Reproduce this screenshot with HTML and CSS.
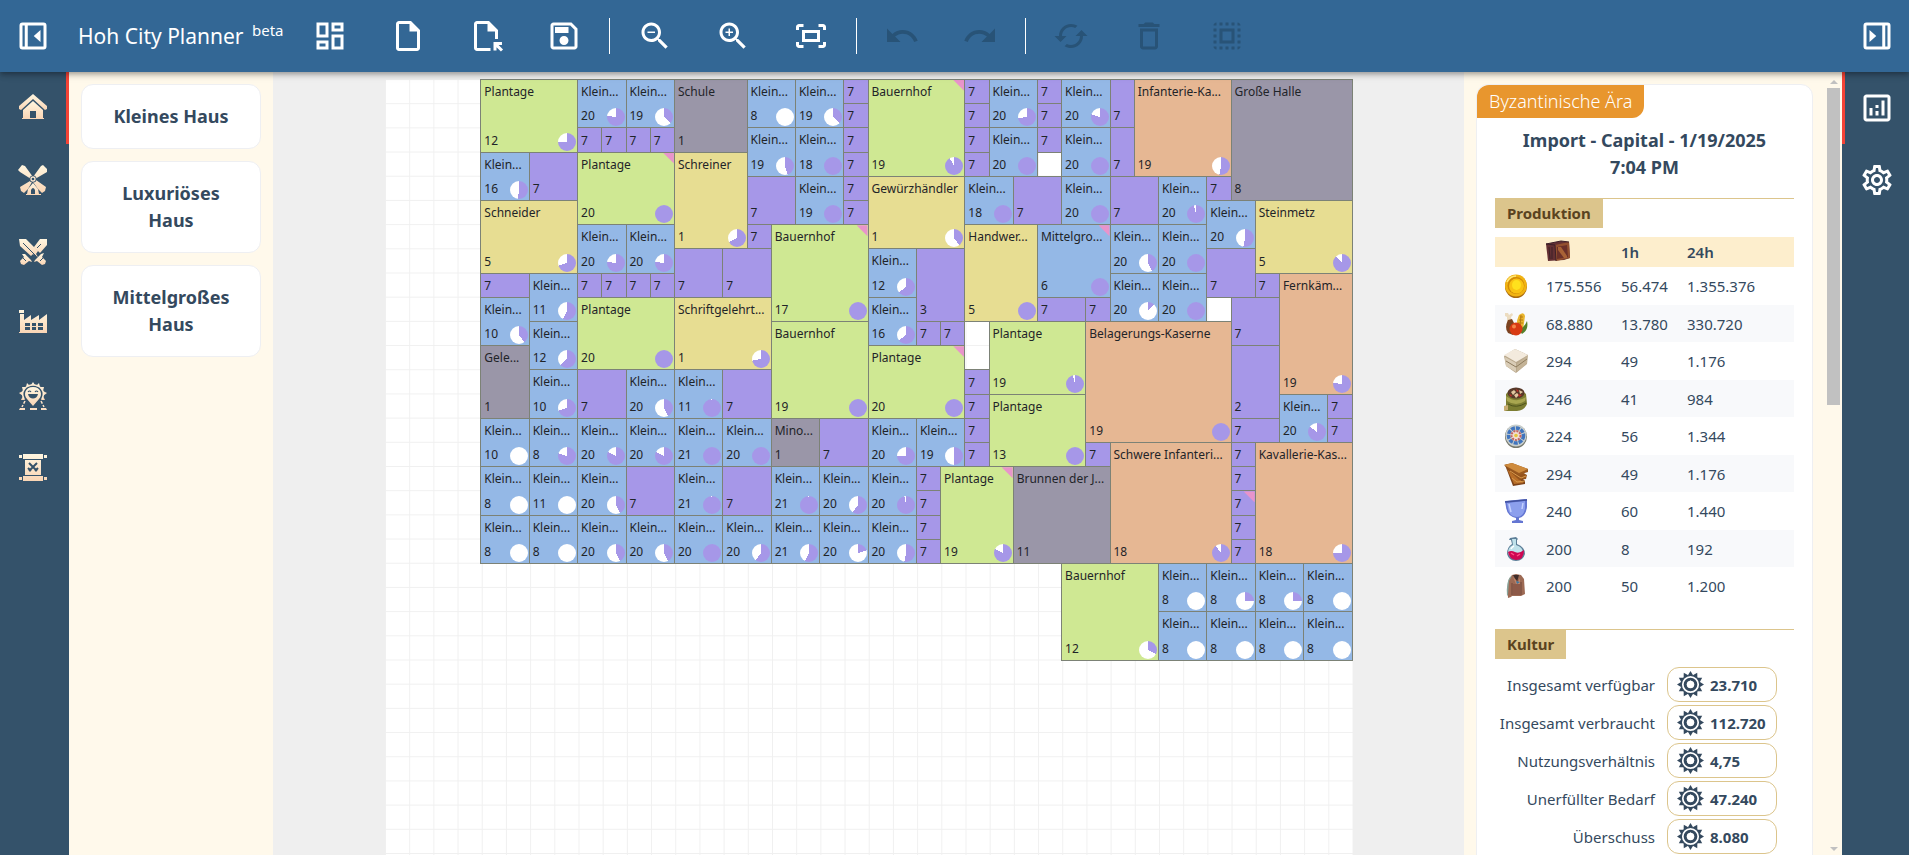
FILE: index.html
```html
<!DOCTYPE html>
<html lang="de">
<head>
<meta charset="utf-8">
<meta name="viewport" content="width=device-width, initial-scale=1">
<title>Hoh City Planner</title>
<link rel="stylesheet" href="styles.css">
</head>
<body>
<header class="topbar">
  <button class="tool tool-edge" type="button" aria-label="Menü"><svg viewBox="0 0 24 24"><path fill-rule="evenodd" d="M5 3h14a2 2 0 0 1 2 2v14a2 2 0 0 1-2 2H5a2 2 0 0 1-2-2V5a2 2 0 0 1 2-2zM5 5v14h1.500V5zM8.500 5v14H19V5zM17 8v8l-4.500-4z"/></svg></button>
  <h1 class="brand">Hoh City Planner <sup>beta</sup></h1>
  <div class="tools">
    <div class="tool-group">
      <button class="tool" type="button" aria-label="Dashboard"><svg viewBox="0 0 24 24"><path d="M19 5v2h-4V5h4M9 5v6H5V5h4m10 8v6h-4v-6h4M9 17v2H5v-2h4M21 3h-8v6h8V3zM11 3H3v10h8V3zm10 8h-8v10h8V11zm-10 4H3v6h8v-6z"/></svg></button>
      <button class="tool" type="button" aria-label="Neu"><svg viewBox="0 0 24 24"><path d="M14 2H6c-1.100 0-1.990.9-1.990 2L4 20c0 1.100.89 2 1.990 2H18c1.100 0 2-.9 2-2V8l-6-6zM6 20V4h7v5h5v11H6z"/></svg></button>
      <button class="tool" type="button" aria-label="Öffnen"><svg viewBox="0 0 24 24"><path d="M15 22H6c-1.100 0-2-.9-2-2V4c0-1.100.9-2 2-2h8l6 6v6h-2V9h-5V4H6v16h9v2zm4-.34v-2.240l2.950 2.950 1.410-1.410L20.410 18h2.240v-2H17v5.660h2z"/></svg></button>
      <button class="tool" type="button" aria-label="Speichern"><svg viewBox="0 0 24 24"><path d="M17 3H5c-1.110 0-2 .9-2 2v14c0 1.100.89 2 2 2h14c1.100 0 2-.9 2-2V7l-4-4zm2 16H5V5h11.170L19 7.830V19zm-7-7c-1.660 0-3 1.340-3 3s1.340 3 3 3 3-1.340 3-3-1.340-3-3-3zM6 6h9v4H6z"/></svg></button>
    </div>
    <span class="divider"></span>
    <div class="tool-group">
      <button class="tool" type="button" aria-label="Verkleinern"><svg viewBox="0 0 24 24"><path d="M15.500 14h-.79l-.28-.27C15.410 12.590 16 11.110 16 9.500 16 5.910 13.090 3 9.500 3S3 5.910 3 9.500 5.910 16 9.500 16c1.610 0 3.090-.59 4.230-1.570l.27.28v.79l5 4.990L20.490 19l-4.990-5zm-6 0C7.010 14 5 11.990 5 9.500S7.010 5 9.500 5 14 7.010 14 9.500 11.990 14 9.500 14zM7 9h5v1H7z"/></svg></button>
      <button class="tool" type="button" aria-label="Vergrößern"><svg viewBox="0 0 24 24"><path d="M15.500 14h-.79l-.28-.27C15.410 12.590 16 11.110 16 9.500 16 5.910 13.090 3 9.500 3S3 5.910 3 9.500 5.910 16 9.500 16c1.610 0 3.090-.59 4.230-1.570l.27.28v.79l5 4.990L20.490 19l-4.990-5zm-6 0C7.010 14 5 11.990 5 9.500S7.010 5 9.500 5 14 7.010 14 9.500 11.990 14 9.500 14zM12 10h-2v2H9v-2H7V9h2V7h1v2h2v1z"/></svg></button>
      <button class="tool" type="button" aria-label="Einpassen"><svg viewBox="0 0 24 24"><path d="M17 4h3c1.100 0 2 .9 2 2v2h-2V6h-3V4zM4 8V6h3V4H4c-1.100 0-2 .9-2 2v2h2zm16 8v2h-3v2h3c1.100 0 2-.9 2-2v-2h-2zM7 18H4v-2H2v2c0 1.100.9 2 2 2h3v-2zM16 10v4H8v-4h8m2-2H6v8h12V8z"/></svg></button>
    </div>
    <span class="divider"></span>
    <div class="tool-group">
      <button class="tool" type="button" aria-label="Rückgängig" disabled><svg viewBox="0 0 24 24"><path d="M12.500 8c-2.650 0-5.050.99-6.900 2.600L2 7v9h9l-3.620-3.620c1.390-1.160 3.160-1.880 5.120-1.880 3.540 0 6.550 2.310 7.600 5.500l2.370-.78C21.080 11.030 17.150 8 12.500 8z"/></svg></button>
      <button class="tool" type="button" aria-label="Wiederholen" disabled><svg viewBox="0 0 24 24"><path d="M18.400 10.600C16.550 8.990 14.150 8 11.500 8c-4.650 0-8.580 3.030-9.960 7.220L3.900 16c1.050-3.190 4.050-5.500 7.600-5.500 1.950 0 3.730.72 5.120 1.880L13 16h9V7l-3.600 3.600z"/></svg></button>
    </div>
    <span class="divider"></span>
    <div class="tool-group">
      <button class="tool" type="button" aria-label="Drehen" disabled><svg viewBox="0 0 24 24"><path d="M19 8l-4 4h3c0 3.310-2.690 6-6 6-1.010 0-1.970-.25-2.800-.7l-1.460 1.460C8.970 19.540 10.430 20 12 20c4.420 0 8-3.580 8-8h3l-4-4zM6 12c0-3.310 2.690-6 6-6 1.010 0 1.970.25 2.800.7l1.460-1.460C15.030 4.460 13.570 4 12 4c-4.420 0-8 3.580-8 8H1l4 4 4-4H6z"/></svg></button>
      <button class="tool" type="button" aria-label="Löschen" disabled><svg viewBox="0 0 24 24"><path d="M16 9v10H8V9h8m-1.500-6h-5l-1 1H5v2h14V4h-3.500l-1-1zM18 7H6v12c0 1.100.9 2 2 2h8c1.100 0 2-.9 2-2V7z"/></svg></button>
      <button class="tool" type="button" aria-label="Auswählen" disabled><svg viewBox="0 0 24 24"><path d="M3 5h2V3c-1.100 0-2 .9-2 2zm0 8h2v-2H3v2zm4 8h2v-2H7v2zM3 9h2V7H3v2zm10-6h-2v2h2V3zm6 0v2h2c0-1.100-.9-2-2-2zM5 21v-2H3c0 1.100.9 2 2 2zm-2-4h2v-2H3v2zM9 3H7v2h2V3zm2 18h2v-2h-2v2zm8-8h2v-2h-2v2zm0 8c1.100 0 2-.9 2-2h-2v2zm0-12h2V7h-2v2zm0 8h2v-2h-2v2zm-4 4h2v-2h-2v2zm0-16h2V3h-2v2zM7 17h10V7H7v10zm2-8h6v6H9V9z"/></svg></button>
    </div>
  </div>
  <button class="tool tool-edge" type="button" aria-label="Seitenleiste"><svg viewBox="0 0 24 24"><path fill-rule="evenodd" d="M5 3h14a2 2 0 0 1 2 2v14a2 2 0 0 1-2 2H5a2 2 0 0 1-2-2V5a2 2 0 0 1 2-2zM17.500 5v14H19V5zM5 5v14h10.500V5zM7 8v8l4.500-4z"/></svg></button>
</header>

<div class="workspace">
  <nav class="rail rail-left">
    <button class="tab active" type="button" aria-label="Häuser"><svg viewBox="0 0 28 28"><g fill="url(#cream)"><path d="M14 0 0 12v3l2 1L14 5l12 11 2-1v-3z"/><path d="M14 7 4 16v8H3v1h22v-1h-1v-8zm-3 10h6v7h-6z" fill-rule="evenodd"/></g></svg></button>
    <button class="tab" type="button" aria-label="Bauernhöfe"><svg viewBox="0 0 28 28"><g fill="url(#cream)"><path d="M-1 4 3-1l3 1 8 11-2 2L1 6zM24-1l4 4v3L16 13l-2-2 8-11zM11 15l2 1-4 7-4 4-3-2-1-4zM17 14l10 7-1 4-3 2-4-4-5-7z"/><path fill-rule="evenodd" d="M14 17l-5 6-1 5H7v1h15v-1h-2l-1-5zm-2 7q2-4 4 0v4h-4z"/></g><circle cx="14" cy="13" r="3.500" fill="#34526a"/><circle cx="14" cy="13" r="2" fill="none" stroke="#fbe6cf" stroke-width="1.300"/></svg></button>
    <button class="tab" type="button" aria-label="Kasernen"><svg viewBox="0 0 28 28"><g fill="url(#cream)"><path d="M0 1h7l12 12-2 3 2 3-5-3-2 2L1 8zM21 1h7v6l-7 8-4-4-2-2z"/><path d="M6 16l6 6 1 2-3-1-5 4-3-1-1-3 4-4-2-3zM22 16l3-1-2 4 4 4-1 3-3 1-5-4-3 1 1-2z"/></g><path d="M4 5l13 13M22 6l-4 4M4 20l3 3M24 20l-3 3" stroke="#34526a" fill="none"/></svg></button>
    <button class="tab" type="button" aria-label="Werkstätten"><svg viewBox="0 0 28 28"><path fill="url(#cream)" fill-rule="evenodd" d="M0 0h5v3H0zM1 4h4v6l7-5v5l8-5v5l8-6v19H0v-1h1zM6 13v3h5v-3zm7 0v3h4v-3zm6 0v3h5v-3zM6 17v3h5v-3zm7 0v3h4v-3zm6 0v3h5v-3z"/></svg></button>
    <button class="tab" type="button" aria-label="Kultur"><svg viewBox="0 0 28 28"><path fill="url(#cream)" d="M14 0l2 3h-4zM8 1l3 3-4 1zM20 1l1 4-4-1zM3 5h4L4 9zM25 5l-1 4-3-4zM0 11l4-2v5zM28 11l-4 3V9zM2 18l2-4 2 4zM26 18h-4l2-4z"/><path fill="none" stroke="#fdebd2" stroke-width="1.500" d="M5 17C1 9 7 3 14 3s13 6 9 14"/><path fill="url(#cream)" fill-rule="evenodd" d="M14 5c-8 0-10 8-6 12l6 7 6-7c4-4 2-12-6-12zm-5 7h10c-1 6-9 6-10 0z"/><path d="M9 10q1.500-2 3 0M16 10q1.500-2 3 0" stroke="#34526a" fill="none" stroke-width="1.200"/><path d="M6 19l-3 6M22 19l3 6" stroke="#fbe2c8" stroke-width="1.500" stroke-dasharray="3 1.500"/><path d="M0 28l1-2h5v2zM11 26h7v2h-7zM22 26h5l1 2h-6z" fill="#fbdfc4"/></svg></button>
    <button class="tab" type="button" aria-label="Schriftrolle"><svg viewBox="0 0 28 28"><g fill="url(#cream)"><path d="M4 0h20v5H4zM0 1h3v3H0zM25 1h3v3h-3zM4 22h20v5H4zM0 23h3v3H0zM25 23h3v3h-3zM6 6h16v15H6z"/></g><path d="M10 9l8 8M18 9l-8 8M9 14l3 3M19 14l-3 3" stroke="#34526a" stroke-width="2"/></svg></button>
  </nav>

  <aside class="palette">
    <button class="palette-card" type="button">Kleines Haus</button>
    <button class="palette-card" type="button">Luxuriöses Haus</button>
    <button class="palette-card" type="button">Mittelgroßes Haus</button>
  </aside>

  <main class="stage"><div class="board" id="board"></div></main>

  <aside class="info">
    <div class="info-body">
      <section class="card">
        <span class="age">Byzantinische Ära</span>
        <h2 class="city-name">Import - Capital - 1/19/2025 <span class="time">7:04 PM</span></h2>
        <div class="section-head"><h3>Produktion</h3></div>
        <table class="production">
          <thead><tr><th class="cell-icon"></th><th><svg class="res" viewBox="0 0 24 24" role="img" aria-label="Lager"><path fill="#643033" d="M0 4 15 1l8 1 1 16-6 2L2 21z"/><path fill="#93502f" d="m9 5 14-3 1 16-14 3z"/><path fill="#6b3029" d="m11 7 10-2 1 12-11 2z"/><path fill="#a86236" d="m12 7 3 0 6 9v2l-3 0-6-8z"/><path stroke="#3d2028" fill="none" d="M9 5 0 4M3 7l1 12M6 7v12M9 5l1 16M0 4l15-3 8 1"/></svg></th><th>1h</th><th>24h</th></tr></thead>
          <tbody>
            <tr><td class="cell-icon"><svg class="res" viewBox="0 0 24 24" role="img" aria-label="Münzen"><ellipse cx="12" cy="12.500" rx="11" ry="11.500" fill="#a8690e"/><ellipse cx="12" cy="11.500" rx="11" ry="11" fill="#f1b312"/><ellipse cx="12" cy="11.500" rx="8.500" ry="8.500" fill="#d08a08"/><ellipse cx="12.500" cy="12" rx="7.500" ry="7.500" fill="#f9c212"/><ellipse cx="12.500" cy="11" rx="4.500" ry="5" fill="#ffe11d"/><path d="M3 8q3-6 9-6" stroke="#ffe777" stroke-width="1.500" fill="none"/></svg></td><td>175.556</td><td>56.474</td><td>1.355.376</td></tr>
            <tr><td class="cell-icon"><svg class="res" viewBox="0 0 24 24" role="img" aria-label="Nahrung"><path d="m1 1 3 0 1 2 3-2 1 2-2 2 1 5-5 1V5L1 4z" fill="#ecdcc0"/><path d="M4 8l4-1 3 6-2 10-5-2q-4-5 0-13z" fill="#7b4321"/><path d="M15 3q5-4 6 1l-2 14-6-2q-1-7 2-13z" fill="#e9b52e"/><path d="M16 5l3 0M15 8h4M14 11h5M17 3l-1 12" stroke="#b77b12" fill="none"/><path d="M23 9q2 9-5 13l-3-4q5-2 8-9z" fill="#55802a"/><circle cx="12" cy="17" r="6.500" fill="#d83a13"/><circle cx="10" cy="14.500" r="2" fill="#f58549"/></svg></td><td>68.880</td><td>13.780</td><td>330.720</td></tr>
            <tr><td class="cell-icon"><svg class="res" viewBox="0 0 24 24" role="img" aria-label="Marmor"><path d="M0 7 11 0l13 6-1 9-11 9-10-7z" fill="#b9a88c"/><path d="M0 6 11 0l13 6-12 7z" fill="#f3eadd"/><path d="m1 8 11 6v9L2 17z" fill="#d9ccb6"/><path d="m13 15 10-8v7l-10 9z" fill="#c4b397"/><path d="m2 12 10 6 11-8" stroke="#8f7d5f" fill="none"/></svg></td><td>294</td><td>49</td><td>1.176</td></tr>
            <tr><td class="cell-icon"><svg class="res" viewBox="0 0 24 24" role="img" aria-label="Gewürze"><path d="M2 7q9-10 20 0l1 10q-3 8-15 7H1l1-6z" fill="#7c7d32"/><path d="M2 9q10 8 20 1l-1 4q-9 6-18 0z" fill="#a9a650"/><path d="M4 17q8 5 18-1" stroke="#4f531d" fill="none"/><ellipse cx="12" cy="6" rx="8.500" ry="5.500" fill="#57392a"/><path d="m7 5 3-2 2 2-3 3zM15 3l4 2-3 2zM10 8l3-2 2 2-3 3z" fill="#e2c6a0"/><path d="m12 2 3 2-2 1zM14 7l4 1-3 2zM5 7l3 1-1 2z" fill="#bd2f28"/><path d="M0 19l4-1v5l-4 1z" fill="#c9ad72"/></svg></td><td>246</td><td>41</td><td>984</td></tr>
            <tr><td class="cell-icon"><svg class="res" viewBox="0 0 24 24" role="img" aria-label="Mosaik"><ellipse cx="12" cy="12.500" rx="11" ry="11.500" fill="#77796d"/><ellipse cx="12" cy="11.500" rx="10.500" ry="11" fill="#c9cfcd"/><circle cx="12" cy="11.500" r="7.500" fill="none" stroke="#4175be" stroke-width="3.500" stroke-dasharray="4 1"/><circle cx="12" cy="11.500" r="4.500" fill="#f0ded4" stroke="#c56563" stroke-width="2" stroke-dasharray="2 1"/><circle cx="12" cy="11.500" r="1.800" fill="#e6c63d"/></svg></td><td>224</td><td>56</td><td>1.344</td></tr>
            <tr><td class="cell-icon"><svg class="res" viewBox="0 0 24 24" role="img" aria-label="Bretter"><path d="M1 3 4 2l17 17v3L9 24z" fill="#7b4218"/><path d="M3 7 20 21l-10 1z" fill="#b86e28"/><path d="M1 4 6 3l17 10-1 4-7 1z" fill="#95541d"/><path d="M0 3 8 1l16 6v3l-9 3z" fill="#9b5a20"/><path d="M0 3 8 1l16 6-9 4z" fill="#ce8b3d"/><path d="m6 9 11 7 5-2M8 16l5 4 8-1" stroke="#d8994b" fill="none"/></svg></td><td>294</td><td>49</td><td>1.176</td></tr>
            <tr><td class="cell-icon"><svg class="res" viewBox="0 0 24 24" role="img" aria-label="Glas"><path d="M1 2 23 0v8q-1 9-8 11v2l4 1v2H8v-2l4-1v-2Q3 17 2 8z" fill="#6476d2"/><path d="M3 4l18-2v8q-2 8-8 8-8-1-9-8z" fill="#8c9fed"/><path d="M5 5l2 8M19 4l-1 6" stroke="#c5d1ff" stroke-width="1.500"/><path d="M1 3l22-2" stroke="#41519e" stroke-width="1.500"/></svg></td><td>240</td><td>60</td><td>1.440</td></tr>
            <tr><td class="cell-icon"><svg class="res" viewBox="0 0 24 24" role="img" aria-label="Elixier"><path d="M6 1l6-1 2 2-1 1v4q8 3 8 10-2 7-9 7t-9-7q0-7 5-10l-1-4H5z" fill="#5d7f98"/><path d="M8 2h4v6q7 2 7 8-1 6-7 6t-8-6q0-6 5-8z" fill="#bfe1ea"/><path d="M4 15q3-2 7 0t9-2q0 10-8 10-7-1-8-8z" fill="#ce0752"/><path d="M7 16l3 2M13 19l3-2" stroke="#ff4d84" stroke-width="1.500"/><path d="M7 12q1-2 3-3" stroke="#fff" fill="none" stroke-width="1.500"/></svg></td><td>200</td><td>8</td><td>192</td></tr>
            <tr><td class="cell-icon"><svg class="res" viewBox="0 0 24 24" role="img" aria-label="Kleidung"><path d="m8 1 4-1 5 1 3 4 1 15-4 2-9 0-1 1-3 1Q3 12 5 5z" fill="#9d6a54"/><path d="m8 2-3 5-1 14-1 1Q2 8 6 3z" fill="#88a49b"/><path d="M9 1h6l-2 7z" fill="#3f2d2b"/><path d="M8 9v12M17 8v13" stroke="#70463a"/><path d="M9 10h7v11H9z" fill="#8d5948"/><path d="m9 3 3 7 4 0V4l-2 4z" fill="#c08468"/><path d="m12 7 4 1-3 2z" fill="#3979a4"/></svg></td><td>200</td><td>50</td><td>1.200</td></tr>
          </tbody>
        </table>
        <div class="section-head"><h3>Kultur</h3></div>
        <dl class="culture">
          <dt>Insgesamt verfügbar</dt><dd><svg class="gear" viewBox="0 0 28 28"><use href="#gear"/></svg>23.710</dd>
          <dt>Insgesamt verbraucht</dt><dd><svg class="gear" viewBox="0 0 28 28"><use href="#gear"/></svg>112.720</dd>
          <dt>Nutzungsverhältnis</dt><dd><svg class="gear" viewBox="0 0 28 28"><use href="#gear"/></svg>4,75</dd>
          <dt>Unerfüllter Bedarf</dt><dd><svg class="gear" viewBox="0 0 28 28"><use href="#gear"/></svg>47.240</dd>
          <dt>Überschuss</dt><dd><svg class="gear" viewBox="0 0 28 28"><use href="#gear"/></svg>8.080</dd>
        </dl>
      </section>
    </div>
    <div class="scrollbar"><span class="arrow arrow-up"></span><span class="track"><span class="thumb"></span></span><span class="arrow arrow-down"></span></div>
  </aside>

  <nav class="rail rail-right">
    <button class="tab active" type="button" aria-label="Statistik"><svg class="glyph" viewBox="0 0 24 24"><path d="M19 3H5c-1.100 0-2 .9-2 2v14c0 1.100.9 2 2 2h14c1.100 0 2-.9 2-2V5c0-1.100-.9-2-2-2zm0 16H5V5h14v14zM7 12h2v5H7zm8-5h2v10h-2zm-4 7h2v3h-2zm0-4h2v2h-2z"/></svg></button>
    <button class="tab" type="button" aria-label="Einstellungen"><svg class="glyph" viewBox="0 0 24 24"><path d="M19.430 12.980c.04-.32.07-.64.07-.98 0-.34-.03-.66-.07-.98l2.110-1.650c.19-.15.24-.42.12-.64l-2-3.460c-.09-.16-.26-.25-.44-.25-.06 0-.12.01-.17.03l-2.490 1c-.52-.4-1.080-.73-1.690-.98l-.38-2.650C14.460 2.180 14.250 2 14 2h-4c-.25 0-.46.18-.49.42l-.38 2.650c-.61.25-1.170.59-1.690.98l-2.490-1c-.06-.02-.12-.03-.18-.03-.17 0-.34.09-.43.25l-2 3.460c-.13.22-.07.49.12.64l2.110 1.650c-.04.32-.07.65-.07.98 0 .33.03.66.07.98l-2.110 1.650c-.19.15-.24.42-.12.64l2 3.460c.09.16.26.25.44.25.06 0 .12-.01.17-.03l2.490-1c.52.4 1.080.73 1.690.98l.38 2.650c.03.24.24.42.49.42h4c.25 0 .46-.18.49-.42l.38-2.650c.61-.25 1.170-.59 1.690-.98l2.490 1c.06.02.12.03.18.03.17 0 .34-.09.43-.25l2-3.460c.12-.22.07-.49-.12-.64l-2.110-1.650zm-1.980-1.710c.04.31.05.52.05.73 0 .21-.02.43-.05.73l-.14 1.130.89.7 1.080.84-.7 1.210-1.270-.51-1.040-.42-.9.68c-.43.32-.84.56-1.250.73l-1.060.43-.16 1.130-.2 1.350h-1.400l-.19-1.350-.16-1.130-1.060-.43c-.43-.18-.83-.41-1.230-.71l-.91-.7-1.060.43-1.270.51-.7-1.210 1.080-.84.89-.7-.14-1.130c-.03-.31-.05-.54-.05-.74s.02-.43.05-.73l.14-1.130-.89-.7-1.080-.84.7-1.210 1.270.51 1.040.42.9-.68c.43-.32.84-.56 1.250-.73l1.060-.43.16-1.130.2-1.350h1.390l.19 1.350.16 1.130 1.060.43c.43.18.83.41 1.230.71l.91.7 1.060-.43 1.270-.51.7 1.210-1.070.85-.89.7.14 1.130zM12 8c-2.210 0-4 1.790-4 4s1.790 4 4 4 4-1.790 4-4-1.790-4-4-4zm0 6c-1.100 0-2-.9-2-2s.9-2 2-2 2 .9 2 2-.9 2-2 2z"/></svg></button>
  </nav>
</div>

<svg class="defs" width="0" height="0" aria-hidden="true">
  <defs>
    <linearGradient id="cream" x1="0" y1="0" x2="0" y2="1"><stop offset="0" stop-color="#fff6e0"/><stop offset="1" stop-color="#f9d5b5"/></linearGradient>
    <g id="gear" fill="#34495e">
      <g id="teeth"><path d="M14 0l3 5h-6z"/><path d="M14 28l3-5h-6z"/><path d="M0 14l5-3v6z"/><path d="M28 14l-5-3v6z"/></g>
      <use href="#teeth" transform="rotate(30 14 14)"/><use href="#teeth" transform="rotate(60 14 14)"/>
      <circle cx="14" cy="14" r="9.500" fill="#fff" stroke="#34495e" stroke-width="1.200"/>
      <circle cx="14" cy="14" r="5.500" fill="#fff" stroke="#34495e" stroke-width="3.200"/>
      <path d="M14 9.500 9.800 14H12v3h4v-3h2.200z" fill="#fff"/>
    </g>
  </defs>
</svg>
<script src="map.js"></script>
</body>
</html>
```
FILE: styles.css
```css
* { box-sizing: border-box; }
body {
  margin: 0;
  height: 100vh;
  display: flex;
  flex-direction: column;
  overflow: hidden;
  font-family: "Noto Sans", "Open Sans", sans-serif;
  font-size: 15px;
  color: #34495e;
  background: #efefef;
}
button { font: inherit; color: inherit; border: 0; background: none; padding: 0; cursor: pointer; }
h1, h2, h3, dl, dd { margin: 0; }
.defs { display: block; flex: none; }

.topbar {
  position: relative;
  z-index: 2;
  flex: none;
  height: 72px;
  display: flex;
  align-items: center;
  background: #336795;
  color: #fff;
  box-shadow: 0 2px 4px -1px rgba(0,0,0,.2), 0 4px 5px rgba(0,0,0,.14), 0 1px 10px rgba(0,0,0,.12);
}
.brand { width: 222px; margin-left: 12px; font-size: 21px; font-weight: 400; line-height: 30px; white-space: nowrap; }
.brand sup { margin-left: 3px; font-size: 15px; line-height: 0; }
.tools { flex: 1; display: flex; align-items: center; gap: 15px; }
.tool-group { display: flex; gap: 18px; }
.tool { width: 60px; height: 60px; display: grid; place-items: center; flex: none; }
.tool-edge { width: 64px; }
.tool-edge:first-child { width: 66px; }
.tool svg { width: 36px; height: 36px; fill: #fff; }
.tool:disabled svg { fill: #285377; }
.divider { width: 1px; height: 36px; background: #fff; }

.workspace { flex: 1; min-height: 0; display: flex; }
.rail { flex: none; background: #34526a; }
.rail-left { width: 69px; }
.rail-right { width: 67px; }
.tab { width: 100%; height: 72px; display: grid; place-items: center; border: 0 solid transparent; }
.rail-left .tab { border-right-width: 3px; }
.rail-right .tab { border-left-width: 3px; }
.rail .tab.active { border-color: #f44336; }
.tab svg { width: 28px; height: 28px; overflow: visible; }
.tab svg.glyph { width: 36px; height: 36px; fill: #fff; }

.palette { flex: none; width: 204px; padding: 12px; display: flex; flex-direction: column; gap: 12px; background: #fff9eb; }
.palette-card {
  padding: 18px;
  border: 1px solid #eeeff2;
  border-radius: 12px;
  background: #fff;
  font-size: 18px;
  font-weight: 700;
  line-height: 27px;
}

.stage { flex: 1; min-width: 0; overflow: hidden; padding-top: 7px; background: #efefef; }
.board {
  width: 100%;
  max-width: 968px;
  margin: 0 auto;
  aspect-ratio: 1;
  display: grid;
  grid-template: repeat(40, minmax(0, 1fr)) / repeat(40, minmax(0, 1fr));
  background-color: #fff;
  background-image: linear-gradient(#f0f0f0 1px, transparent 1px), linear-gradient(90deg, #f0f0f0 1px, transparent 1px);
  background-size: 2.5% 2.5%;
}
.tile {
  position: relative;
  overflow: hidden;
  margin: 0 0 -1px -1px;
  padding: 0 1px 0 3px;
  border: 1px solid #7c8276;
  display: flex;
  flex-direction: column;
  justify-content: space-between;
  font-size: 12px;
  line-height: 23px;
  color: #1f2428;
  white-space: nowrap;
}
.level { margin-top: auto; }
.home { background: #94b8e6; }
.culture-site { background: #a697e8; }
.farm { background: #cfe893; }
.workshop { background: #e7dd92; }
.barracks { background: #e6b793; }
.special { background: #9a96a8; }
.pie { position: absolute; right: 1px; bottom: 1px; width: 18px; height: 18px; border-radius: 50%; }
.flag { position: absolute; top: 0; right: 0; width: 11px; height: 11px; background: #e894cb; clip-path: polygon(0 0, 100% 0, 100% 100%); }

.info { flex: none; width: 378px; display: flex; background: #fff9eb; }
.info-body { flex: 1; padding: 12px 14px 0 12px; overflow: hidden; }
.card { border: 1px solid #eeeff2; border-radius: 12px; padding: 0 18px 24px; background: #fff; }
.age {
  display: inline-block;
  margin-left: -18px;
  padding: 0 12px;
  border-radius: 12px 0 12px 0;
  background: #e8962e;
  color: #fff;
  font-size: 18px;
  font-weight: 300;
  line-height: 33px;
}
.city-name { margin: 9px 0 17px; text-align: center; font-size: 18px; font-weight: 700; line-height: 27px; }
.time { display: block; }
.section-head { border-top: 1px solid #dcc58c; }
.section-head h3 { display: inline-block; padding: 0 12px; background: #dcc58c; color: #5a4320; font-size: 15px; font-weight: 700; line-height: 29px; }
.production { width: 100%; margin: 9px 0 24px; border-collapse: collapse; table-layout: fixed; }
.production th, .production td { padding: 0; text-align: left; }
.production th { height: 30px; background: #fdeecd; font-weight: 600; }
.production th:nth-child(1) { width: 51px; }
.production th:nth-child(2) { width: 75px; }
.production th:nth-child(3) { width: 66px; }
.production td { height: 38px; }
.production tr:nth-child(even) td { height: 37px; background: #f8f9fb; }
.production .cell-icon { padding-left: 9px; }
.res { display: block; width: 24px; height: 24px; }
.culture { display: grid; grid-template-columns: 160px 110px; gap: 3px 12px; margin-top: 8px; align-items: center; }
.culture dt { text-align: right; white-space: nowrap; }
.culture dd { height: 35px; display: flex; align-items: center; gap: 6px; padding-left: 9px; border: 1px solid #dcc58c; border-radius: 12px; font-weight: 700; }
.gear { width: 27px; height: 27px; }

.scrollbar { width: 15px; padding: 8px 2px 4px 0; display: flex; flex-direction: column; align-items: center; gap: 4px; }
.track { flex: 1; width: 13px; }
.thumb { display: block; height: 42%; background: #c1c1c1; }
.arrow { border: 4px solid transparent; }
.arrow-up { border-top: 0; border-bottom-color: #c1c1c1; }
.arrow-down { border-bottom: 0; border-top-color: #c1c1c1; }
```
FILE: map.js
```js
// kind, name, level, column, row, width, height, coverage in percent (or null), flagged
const H = 'home', C = 'culture-site', F = 'farm', W = 'workshop', B = 'barracks', S = 'special';
const tiles = [
  [F, 'Plantage', 12, 0, 0, 4, 3, 75],
  [S, 'Schule', 1, 8, 0, 3, 3, null],
  [F, 'Bauernhof', 19, 16, 0, 4, 4, 92, true],
  [B, 'Infanterie-Ka...', 19, 27, 0, 4, 4, 53],
  [S, 'Große Halle', 8, 31, 0, 5, 5, null],
  [F, 'Plantage', 20, 4, 3, 4, 3, 100, true],
  [W, 'Schreiner', 1, 8, 3, 3, 4, 68],
  [W, 'Gewürzhändler', 1, 16, 4, 4, 3, 40],
  [W, 'Schneider', 5, 0, 5, 4, 3, 70],
  [W, 'Steinmetz', 5, 32, 5, 4, 3, 88],
  [F, 'Bauernhof', 17, 12, 6, 4, 4, 100, true],
  [W, 'Handwer...', 5, 20, 6, 3, 4, 100],
  [H, 'Mittelgro...', 6, 23, 6, 3, 3, 100, true],
  [B, 'Fernkäm...', 19, 33, 8, 3, 5, 77],
  [F, 'Plantage', 20, 4, 9, 4, 3, 100],
  [W, 'Schriftgelehrt...', 1, 8, 9, 4, 3, 72],
  [F, 'Bauernhof', 19, 12, 10, 4, 4, 100],
  [F, 'Plantage', 19, 21, 10, 4, 3, 96],
  [B, 'Belagerungs-Kaserne', 19, 25, 10, 6, 5, 100],
  [S, 'Gele...', 1, 0, 11, 2, 3, null],
  [F, 'Plantage', 20, 16, 11, 4, 3, 100, true],
  [F, 'Plantage', 13, 21, 13, 4, 3, 100],
  [S, 'Mino...', 1, 12, 14, 2, 2, null],
  [B, 'Schwere Infanteri...', 18, 26, 15, 5, 5, 90],
  [B, 'Kavallerie-Kas...', 18, 32, 15, 4, 5, 75],
  [F, 'Plantage', 19, 19, 16, 3, 4, 82, true],
  [S, 'Brunnen der J...', 11, 22, 16, 4, 4, null],
  [F, 'Bauernhof', 12, 24, 20, 4, 4, 32],
  [C, '', 3, 18, 7, 2, 3, null],
  [C, '', 2, 31, 11, 2, 3, null],
  [C, '', 7, 31, 17, 1, 1, null, true]
];

// small houses: level, column, row, coverage
const houses = [
  [20,4,0,77],[19,6,0,37],[8,11,0,0],[19,13,0,37],[20,21,0,73],[20,24,0,80],
  [19,11,2,45],[18,13,2,100],[20,21,2,100],[20,24,2,100],
  [16,0,3,52],[19,13,4,100],[18,20,4,100],[20,24,4,100],[20,28,4,96],[20,30,5,53],
  [20,4,6,77],[20,6,6,77],[20,26,6,43],[20,28,6,100],[12,16,7,65],
  [11,2,8,57],[20,26,8,12],[20,28,8,100],[10,0,9,40],[16,16,9,65],
  [12,2,10,63],[10,2,12,70],[20,6,12,43],[11,8,12,99],[20,33,13,85],
  [10,0,14,0],[8,2,14,80],[20,4,14,82],[20,6,14,82],[21,8,14,100],[20,10,14,100],[20,16,14,75],[19,18,14,50],
  [8,0,16,0],[11,2,16,0],[20,4,16,43],[21,8,16,99],[21,12,16,99],[20,14,16,60],[20,16,16,97],
  [8,0,18,0],[8,2,18,0],[20,4,18,43],[20,6,18,43],[20,8,18,100],[20,10,18,60],[21,12,18,57],[20,14,18,20],[20,16,18,53],
  [8,28,20,0],[8,30,20,25],[8,32,20,25],[8,34,20,0],[8,28,22,0],[8,30,22,0],[8,32,22,0],[8,34,22,0]
];

// culture sites of level 7: column, row, width, height
const sites = [
  [15,0,1,1],[15,1,1,1],[15,2,1,1],[15,3,1,1],[15,4,1,1],[15,5,1,1],
  [20,0,1,1],[20,1,1,1],[20,2,1,1],[20,3,1,1],[23,0,1,1],[23,1,1,1],[23,2,1,1],
  [26,0,1,2],[26,2,1,2],[4,2,1,1],[5,2,1,1],[6,2,1,1],[7,2,1,1],[2,3,2,2],
  [11,4,2,2],[22,4,2,2],[26,4,2,2],[30,4,1,1],[11,6,1,1],[8,7,2,2],[10,7,2,2],[30,7,2,2],
  [0,8,2,1],[4,8,1,1],[5,8,1,1],[6,8,1,1],[7,8,1,1],[32,8,1,1],[23,9,2,1],[25,9,1,1],[31,9,2,2],
  [18,10,1,1],[19,10,1,1],[4,12,2,2],[10,12,2,2],[20,12,1,1],[20,13,1,1],[20,14,1,1],[20,15,1,1],
  [35,13,1,1],[35,14,1,1],[14,14,2,2],[31,14,2,1],[25,15,1,1],
  [31,15,1,1],[31,16,1,1],[31,18,1,1],[31,19,1,1],[6,16,2,2],[10,16,2,2],
  [18,16,1,1],[18,17,1,1],[18,18,1,1],[18,19,1,1]
];

houses.forEach(([level, col, row, pct]) => tiles.push([H, 'Klein...', level, col, row, 2, 2, pct]));
sites.forEach(([col, row, w, h]) => tiles.push([C, '', 7, col, row, w, h, null]));

const MARGIN_COLUMNS = 4;
const board = document.getElementById('board');

function add(parent, className, text) {
  const el = document.createElement('span');
  el.className = className;
  if (text !== undefined) el.textContent = text;
  parent.appendChild(el);
  return el;
}

for (const [kind, name, level, col, row, w, h, pct, flagged] of tiles) {
  const tile = document.createElement('div');
  tile.className = 'tile ' + kind;
  tile.style.gridArea = `${row + 1} / ${col + 1 + MARGIN_COLUMNS} / span ${h} / span ${w}`;
  if (name) add(tile, 'name', name);
  add(tile, 'level', level);
  if (pct !== null) {
    add(tile, 'pie').style.background = `conic-gradient(#a697e8 ${pct}%, #fff 0)`;
  }
  if (flagged) add(tile, 'flag');
  board.appendChild(tile);
}
```
